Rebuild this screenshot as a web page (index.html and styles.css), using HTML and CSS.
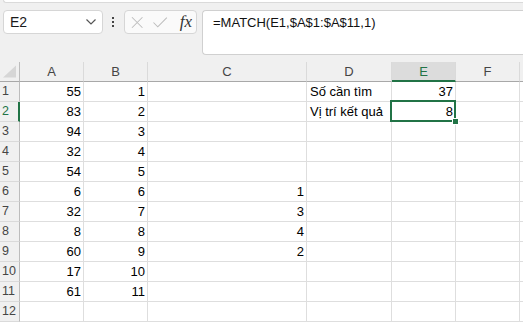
FILE: index.html
```html
<!DOCTYPE html>
<html>
  <head>
    <link rel="stylesheet" href="styles.css">
  </head>
  <body>
    <div class="ribbon-edge"></div>
    <div class="formula-bar">
      <div class="name-box">
        <span>E2</span>
        <svg class="chevron" width="10" height="6" viewBox="0 0 10 6"><path d="M0.5 0.5l4.5 4.5 4.5-4.5" fill="none" stroke="#555" stroke-width="1.2"/></svg>
      </div>
      <div class="dots"><i></i><i></i><i></i></div>
      <div class="fx-box">
        <svg width="13" height="13" viewBox="0 0 13 13"><path d="M1 1l11 11M12 1L1 12" stroke="#bdbdbd" stroke-width="1.1"/></svg>
        <svg width="15" height="11" viewBox="0 0 15 11"><path d="M0.5 5.5l4.5 4.5 9.5-9.5" fill="none" stroke="#bdbdbd" stroke-width="1.1"/></svg>
        <span class="fx">fx</span>
      </div>
      <div class="formula">=MATCH(E1,$A$1:$A$11,1)</div>
    </div>

    <div class="sheet">
      <div class="corner"><svg width="14" height="13" viewBox="0 0 14 13"><path d="M14 0V13H0z" fill="#d6d6d6"/></svg></div>
      <div class="ch">A</div>
      <div class="ch">B</div>
      <div class="ch">C</div>
      <div class="ch">D</div>
      <div class="ch active">E</div>
      <div class="ch">F</div>
      <div class="ch"></div>

      <div class="rh">1</div><div class="c n">55</div><div class="c n">1</div><div class="c"></div><div class="c">Số cần tìm</div><div class="c n">37</div><div class="c"></div><div class="c"></div>
      <div class="rh active">2</div><div class="c n">83</div><div class="c n">2</div><div class="c"></div><div class="c">Vị trí kết quả</div><div class="c n sel-cell">8<div class="selection"><b class="handle"></b></div></div><div class="c"></div><div class="c"></div>
      <div class="rh">3</div><div class="c n">94</div><div class="c n">3</div><div class="c"></div><div class="c"></div><div class="c"></div><div class="c"></div><div class="c"></div>
      <div class="rh">4</div><div class="c n">32</div><div class="c n">4</div><div class="c"></div><div class="c"></div><div class="c"></div><div class="c"></div><div class="c"></div>
      <div class="rh">5</div><div class="c n">54</div><div class="c n">5</div><div class="c"></div><div class="c"></div><div class="c"></div><div class="c"></div><div class="c"></div>
      <div class="rh">6</div><div class="c n">6</div><div class="c n">6</div><div class="c n">1</div><div class="c"></div><div class="c"></div><div class="c"></div><div class="c"></div>
      <div class="rh">7</div><div class="c n">32</div><div class="c n">7</div><div class="c n">3</div><div class="c"></div><div class="c"></div><div class="c"></div><div class="c"></div>
      <div class="rh">8</div><div class="c n">8</div><div class="c n">8</div><div class="c n">4</div><div class="c"></div><div class="c"></div><div class="c"></div><div class="c"></div>
      <div class="rh">9</div><div class="c n">60</div><div class="c n">9</div><div class="c n">2</div><div class="c"></div><div class="c"></div><div class="c"></div><div class="c"></div>
      <div class="rh">10</div><div class="c n">17</div><div class="c n">10</div><div class="c"></div><div class="c"></div><div class="c"></div><div class="c"></div><div class="c"></div>
      <div class="rh">11</div><div class="c n">61</div><div class="c n">11</div><div class="c"></div><div class="c"></div><div class="c"></div><div class="c"></div><div class="c"></div>
      <div class="rh">12</div><div class="c"></div><div class="c"></div><div class="c"></div><div class="c"></div><div class="c"></div><div class="c"></div><div class="c"></div>
    </div>
  </body>
</html>
```
FILE: styles.css
```css
body {
  margin: 0;
  width: 523px;
  height: 322px;
  overflow: hidden;
  background-color: #f0f0f0;
  font-family: "Liberation Sans", Arial, sans-serif;
  font-size: 13px;
  color: #000;
}
.ribbon-edge {
  height: 2px;
  margin-left: 3px;
  background-color: #fff;
  border-bottom: 1px solid #dadada;
  border-left: 1px solid #dadada;
  border-bottom-left-radius: 4px;
}
.formula-bar {
  display: flex;
  align-items: flex-start;
  height: 59px;
  padding: 7px 0 0 3px;
  box-sizing: border-box;
}
.formula-bar > * {
  flex-shrink: 0;
}
.name-box {
  display: flex;
  align-items: center;
  justify-content: space-between;
  box-sizing: border-box;
  width: 100px;
  height: 24px;
  padding: 0 6px 0 6px;
  background-color: #fff;
  border: 1px solid #d6d6d6;
  border-radius: 4px;
  color: #1a1a1a;
  font-size: 14px;
}
.dots {
  display: flex;
  flex-direction: column;
  gap: 2px;
  margin: 7px 0 0 9px;
}
.dots i {
  width: 2px;
  height: 2px;
  background-color: #444;
}
.fx-box {
  display: flex;
  align-items: center;
  gap: 10px;
  box-sizing: border-box;
  width: 73px;
  height: 24px;
  margin-left: 10px;
  padding: 0 4px 0 6px;
  background-color: #fafafa;
  border: 1px solid #d6d6d6;
  border-radius: 4px;
}
.fx {
  font-family: "Liberation Serif", "Times New Roman", serif;
  font-style: italic;
  font-size: 17px;
  color: #333;
  margin-left: 2px;
}
.formula {
  box-sizing: border-box;
  width: 340px;
  height: 45px;
  margin-left: 5px;
  padding: 4px 10px;
  background-color: #fff;
  border: 1px solid #d0d0d0;
  border-right: none;
  border-radius: 4px 0 0 4px;
  color: #111;
  line-height: 16px;
}

.sheet {
  display: grid;
  grid-template-columns: 20px 64px 64px 159px 85px 64px 64px 1fr;
  grid-auto-rows: 20px;
}
.sheet > div {
  box-sizing: border-box;
  border-right: 1px solid #dedede;
  border-bottom: 1px solid #dedede;
  line-height: 19px;
  white-space: nowrap;
  overflow: visible;
}
.corner {
  display: flex;
  align-items: flex-end;
  padding: 0 3px 3px 3px;
  background-color: #f0f0f0;
}
.sheet > .corner {
  border-right: 1px solid #bcbcbc;
  border-bottom: 1px solid #a8a8a8;
}
.sheet > .ch {
  background-color: #f0f0f0;
  border-bottom: 1px solid #a8a8a8;
  border-right: 1px solid #dadada;
  text-align: center;
  color: #454545;
}
.sheet > .ch.active {
  background-color: #dcdcdc;
  border-bottom: 2px solid #217346;
  color: #217346;
}
.sheet > .rh {
  background-color: #f0f0f0;
  border-right: 1px solid #bcbcbc;
  border-bottom: 1px solid #dadada;
  padding-left: 2px;
  color: #454545;
  font-size: 12.5px;
}
.sheet > .rh.active {
  border-right: 2px solid #217346;
  color: #217346;
}
.c {
  background-color: #fff;
  padding: 0 2px 0 3px;
}
.c.n {
  text-align: right;
}
.sel-cell {
  position: relative;
}
.selection {
  position: absolute;
  top: -2px;
  left: -2px;
  right: -1px;
  bottom: -1px;
  border: 2px solid #217346;
}
.handle {
  position: absolute;
  right: -5px;
  bottom: -5px;
  width: 5px;
  height: 5px;
  background-color: #217346;
  border: 1px solid #fff;
}
```
